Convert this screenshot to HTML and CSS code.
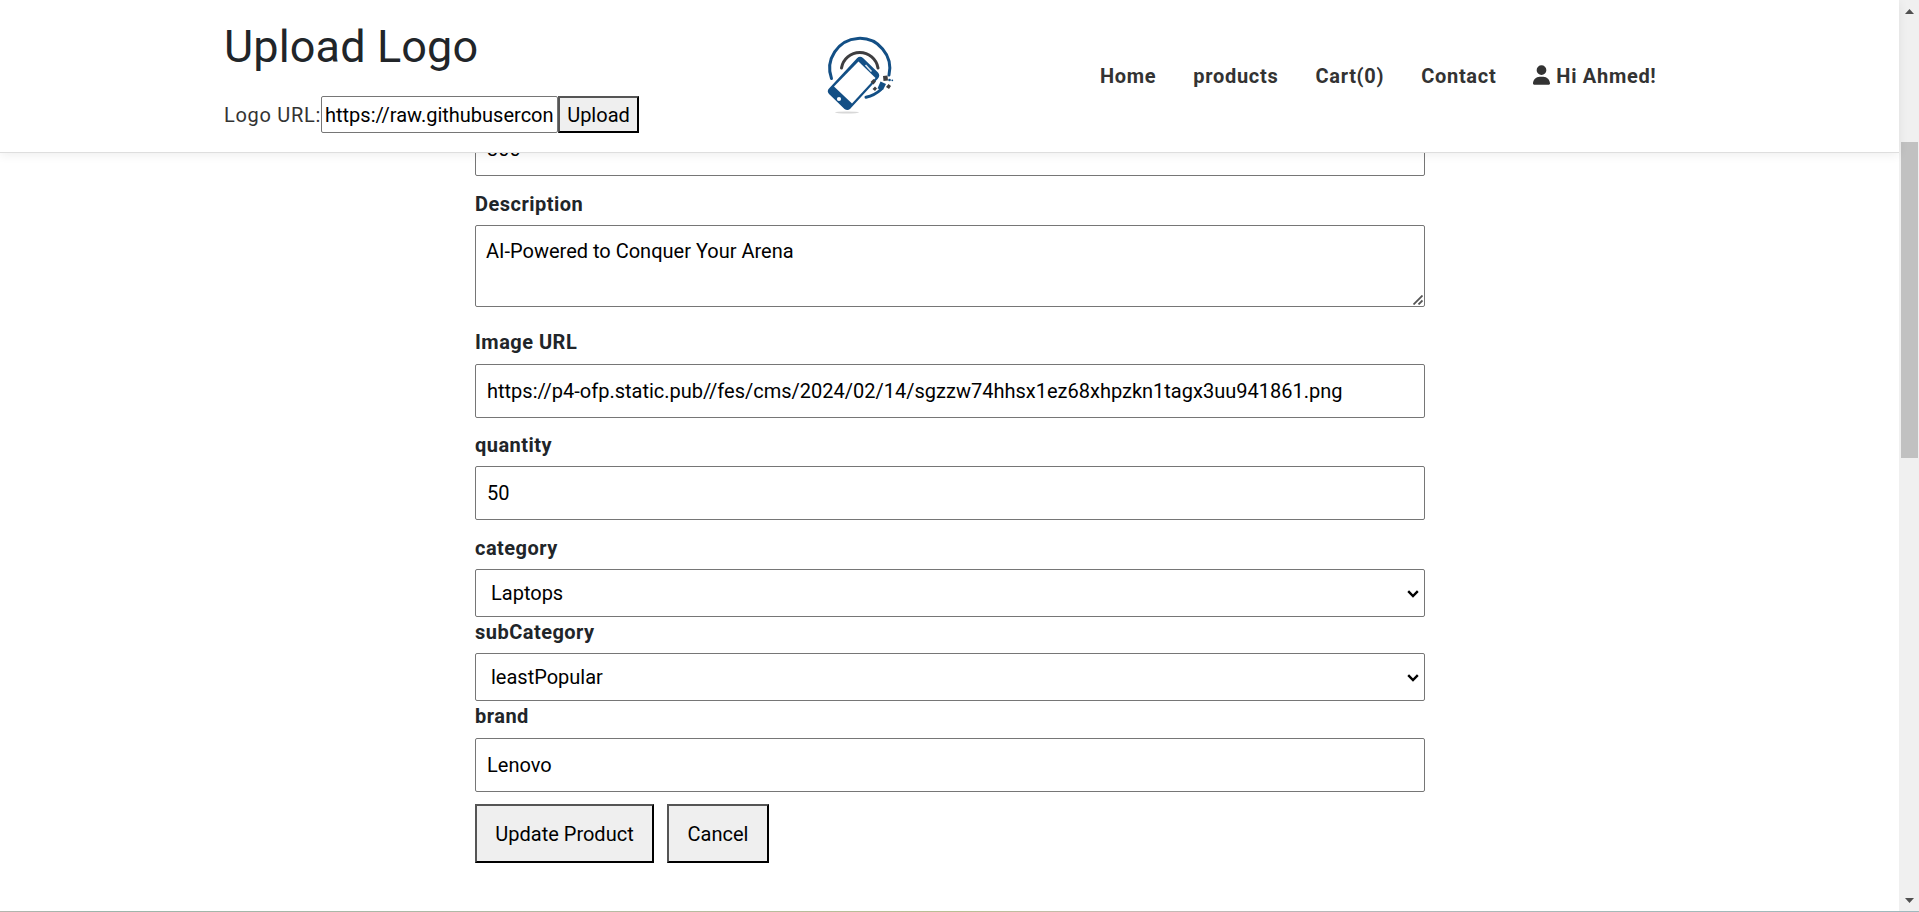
FILE: index.html
```html
<!DOCTYPE html>
<html lang="en">
<head>
<meta charset="utf-8">
<title>Update Product</title>
<link rel="stylesheet" href="styles.css">
</head>
<body>
<div class="window">
  <div class="page">
    <header class="header">
      <div class="upload">
        <h1 class="upload-title">Upload Logo</h1>
        <div class="upload-row">
          <label class="upload-label" for="logo">Logo URL:</label>
          <input class="upload-input" id="logo" value="https://raw.githubusercon">
          <button class="upload-button">Upload</button>
        </div>
      </div>
      <svg class="logo" viewBox="0 0 100 110">
        <ellipse cx="37" cy="93.500" rx="12" ry="0.900" fill="#d8d8d8"/>
        <path d="M21.500 59.500A30 30 0 1 1 79 56" fill="none" stroke="#134f85" stroke-width="3" stroke-linecap="round"/>
        <path d="M56 78.200A31 31 0 0 0 71 70.500" fill="none" stroke="#134f85" stroke-width="3" stroke-linecap="round"/>
        <path d="M31.500 49A18.500 18.500 0 0 1 68 49" fill="none" stroke="#3e3e40" stroke-width="3" stroke-linecap="round"/>
        <path d="M47 39.200Q50 36.600 53 39L68 53.500Q70.500 56.500 68 59.500L40 90Q37.500 92 34.500 90L19 75Q16.500 72 19 69.500Z" fill="#134f85"/>
        <path d="M48.500 42.500L65.500 59L42 84.500L24 67.500Z" fill="#fff"/>
        <path d="M55.500 46L61.500 52.500" stroke="#dfe8f0" stroke-width="1.600"/>
        <circle cx="29" cy="80" r="2.100" fill="#fff"/>
        <path d="M70.500 62.500L76 65L73 71L67.500 69.500Z" fill="#134f85"/>
        <path d="M73 57L77.500 56.500L78 61.500L73.500 62Z M63.500 60L66 62.500L63.500 65.500L60.500 63Z M78.500 65L81 67L79 70L76 68Z M65 67.500L67 69.500L65 72L62.500 70Z" fill="#3e3e40"/>
        <circle cx="79.500" cy="61" r="1.300" fill="#134f85"/><circle cx="82.300" cy="61.300" r="0.900" fill="#134f85"/>
      </svg>
      <nav class="nav">
        <a class="nav-link">Home</a>
        <a class="nav-link">products</a>
        <a class="nav-link">Cart(0)</a>
        <a class="nav-link">Contact</a>
        <a class="nav-link nav-user">
          <svg class="user-icon" viewBox="0 0 448 512"><path fill="currentColor" d="M224 256A128 128 0 1 0 224 0a128 128 0 1 0 0 256zm-45.700 48C79.800 304 0 383.800 0 482.300C0 498.700 13.300 512 29.700 512H418.300c16.400 0 29.700-13.300 29.700-29.700C448 383.800 368.200 304 269.700 304H178.300z"/></svg>
          <span>Hi Ahmed!</span>
        </a>
      </nav>
    </header>
    <main class="form">
      <input class="field field-price" value="300">
      <label class="label label-description">Description</label>
      <div class="control">
        <textarea class="field field-text">AI-Powered to Conquer Your Arena</textarea>
        <svg class="grip" viewBox="0 0 10 10"><path d="M.5 9.500L9.500 .5M5.500 9.500L9.500 5.500" stroke="#555" stroke-width="1.800" fill="none"/></svg>
      </div>
      <label class="label label-image">Image URL</label>
      <input class="field" value="https://p4-ofp.static.pub//fes/cms/2024/02/14/sgzzw74hhsx1ez68xhpzkn1tagx3uu941861.png">
      <label class="label label-quantity">quantity</label>
      <input class="field" value="50">
      <label class="label label-category">category</label>
      <div class="control">
        <select class="field field-select"><option>Laptops</option></select>
        <svg class="chevron" viewBox="0 0 12 8"><path d="M1.200 1.200L6 6L10.800 1.200" fill="none" stroke="#000" stroke-width="2.400"/></svg>
      </div>
      <label class="label label-sub">subCategory</label>
      <div class="control">
        <select class="field field-select"><option>leastPopular</option></select>
        <svg class="chevron" viewBox="0 0 12 8"><path d="M1.200 1.200L6 6L10.800 1.200" fill="none" stroke="#000" stroke-width="2.400"/></svg>
      </div>
      <label class="label label-brand">brand</label>
      <input class="field" value="Lenovo">
      <div class="actions">
        <button class="button button-update">Update Product</button>
        <button class="button button-cancel">Cancel</button>
      </div>
    </main>
  </div>
  <div class="scrollbar">
    <svg class="scroll-arrow" viewBox="0 0 9 5"><path d="M0 5L4.500 0L9 5Z" fill="#505050"/></svg>
    <div class="scroll-thumb"></div>
    <svg class="scroll-arrow scroll-down" viewBox="0 0 9 5"><path d="M0 0H9L4.500 5Z" fill="#505050"/></svg>
  </div>
</div>
<div class="edge"></div>
</body>
</html>
```
FILE: styles.css
```css
* { box-sizing: border-box; }
body {
  margin: 0;
  height: 912px;
  overflow: hidden;
  background: #fff;
  color: #212529;
  font-family: Roboto, sans-serif;
  font-size: 20px;
}
input, textarea, select, button {
  font: inherit;
  color: #000;
  margin: 0;
  border-radius: 0;
}
.window { display: flex; height: 911px; }
.page { flex: 1; min-width: 0; }
.header {
  position: relative;
  z-index: 1;
  display: flex;
  height: 153px;
  padding-left: 224px;
  background: #fff;
  border-bottom: 1px solid #dedede;
  box-shadow: 0 2px 10px rgba(0, 0, 0, .07);
}
.upload { width: 586px; padding-top: 20px; }
.upload-title {
  margin: 0 0 22px;
  font-size: 45px;
  font-weight: 400;
  line-height: 54px;
  letter-spacing: .12px;
  white-space: nowrap;
}
.upload-row { display: flex; height: 37px; }
.upload-label { width: 97px; line-height: 38px; letter-spacing: .7px; white-space: nowrap; color: #333; }
.upload-input {
  width: 237px;
  height: 37px;
  padding: 1px 3px;
  border: 1px solid #767676;
  border-radius: 2px;
  background: #fff;
}
.upload-button {
  width: 81px;
  padding: 0;
  border: 2px solid;
  border-color: #555 #000 #000 #555;
  background: #efefef;
}
.logo { width: 100px; height: 110px; margin-top: 19px; }
.nav {
  display: flex;
  gap: 37px;
  margin-left: 190px;
  padding-top: 61px;
  font-weight: 700;
  line-height: 30px;
  color: #333;
  white-space: nowrap;
}
.nav-link { letter-spacing: .7px; }
.nav-user { display: flex; gap: 6px; }
.user-icon { width: 17px; height: 20px; margin-top: 4px; }
.form { display: flex; flex-direction: column; width: 950px; margin: -31px 0 0 475px; }
.control { position: relative; display: flex; }
.field {
  width: 950px;
  height: 54px;
  padding: 0 11px;
  border: 1px solid #767676;
  border-radius: 2px;
  background: #fff;
}
.field-text { height: 82px; padding: 10px; line-height: 30px; resize: none; overflow: hidden; }
.field-select { height: 48px; padding: 0 15px; appearance: none; }
.grip { position: absolute; right: 2px; bottom: 2px; width: 10px; height: 10px; }
.chevron { position: absolute; right: 6px; top: 21px; width: 12px; height: 8px; }
.label { height: 36px; line-height: 30px; font-weight: 700; letter-spacing: .48px; }
.label-description { margin-top: 13px; }
.label-image { height: 37px; margin-top: 20px; }
.label-quantity { margin-top: 12px; }
.label-category { margin-top: 13px; }
.label-brand { height: 37px; }
.actions { display: flex; gap: 13px; margin-top: 12px; }
.button {
  height: 59px;
  padding: 0;
  border: 2px solid;
  border-color: #555 #000 #000 #555;
  background: #efefef;
}
.button-update { width: 179px; }
.button-cancel { width: 102px; }
.scrollbar {
  display: flex;
  flex-direction: column;
  width: 20px;
  padding: 9px 1px 8px 2px;
  background: #f0f0f0;
}
.scroll-arrow { width: 9px; height: 5px; margin-left: 4px; }
.scroll-thumb { width: 17px; height: 316px; margin-top: 128px; background: #c1c1c1; }
.scroll-down { margin-top: auto; }
.edge { height: 1px; background: linear-gradient(90deg, #b5b5ae, #9db5ab 5%, #b5bba4 30%, #b9bf94 50%, #c9bbb4 58%, #b9b9b9 68%, #a4bab8 85%, #9fb9bd); }
```
